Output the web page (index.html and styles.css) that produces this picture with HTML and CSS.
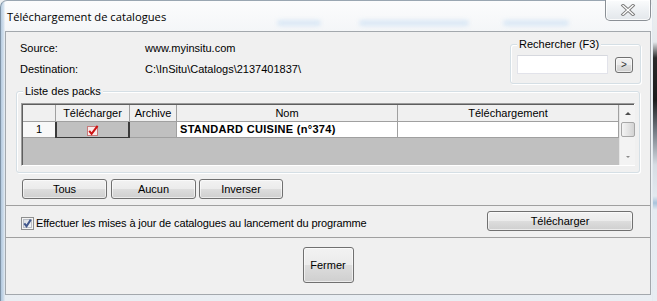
FILE: index.html
```html
<!DOCTYPE html>
<html lang="fr">
<head>
<meta charset="utf-8">
<title>Téléchargement de catalogues</title>
<link rel="stylesheet" href="styles.css">
</head>
<body>
<div class="desktop">
  <div class="window">
    <div class="titlebar">
      <span class="title">Téléchargement de catalogues</span>
      <div class="ghosts">
        <span class="ghost g1"></span>
        <span class="ghost g2"></span>
        <span class="ghost g3"></span>
      </div>
      <div class="close">
        <svg width="16" height="12" viewBox="0 0 16 12">
          <path d="M3 1.5 L13 10.5 M13 1.5 L3 10.5" stroke="#7a7a7a" stroke-width="3.2" stroke-linecap="square" fill="none"/>
          <path d="M3 1.5 L13 10.5 M13 1.5 L3 10.5" stroke="#ffffff" stroke-width="1.3" stroke-linecap="square" fill="none"/>
        </svg>
      </div>
    </div>
    <div class="client">
      <div class="top">
        <div class="info">
          <div class="info-row"><span class="lbl">Source:</span><span>www.myinsitu.com</span></div>
          <div class="info-row"><span class="lbl">Destination:</span><span>C:\InSitu\Catalogs\2137401837\</span></div>
        </div>
        <div class="group search">
          <div class="legend">Rechercher (F3)</div>
          <div class="search-row">
            <div class="input"></div>
            <div class="btn small">&gt;</div>
          </div>
        </div>
      </div>
      <div class="group packs">
        <div class="legend">Liste des packs</div>
        <div class="grid">
          <div class="hc corner"></div>
          <div class="hc">Télécharger</div>
          <div class="hc">Archive</div>
          <div class="hc">Nom</div>
          <div class="hc">Téléchargement</div>
          <div class="scroll">
            <div class="sb-up"><span class="tri-up"></span></div>
            <div class="thumb"></div>
            <div class="sb-down"><span class="tri-down"></span></div>
          </div>
          <div class="rc rownum">1</div>
          <div class="rc sel">
            <svg width="12" height="11" viewBox="0 0 12 11">
              <rect x="0.5" y="1.5" width="10" height="9" fill="#fbeaea" stroke="#c77a7a"/>
              <path d="M2.2 5.8 L4.6 8.8 L10.6 0.8" stroke="#cc1111" stroke-width="2" fill="none"/>
            </svg>
          </div>
          <div class="rc gray"></div>
          <div class="rc name">STANDARD CUISINE (n°374)</div>
          <div class="rc white"></div>
          <div class="empty"></div>
        </div>
      </div>
      <div class="btnrow">
        <div class="btn b-tous">Tous</div>
        <div class="btn b-aucun">Aucun</div>
        <div class="btn b-inv">Inverser</div>
      </div>
      <div class="sep"></div>
      <div class="optrow">
        <div class="check">
          <svg class="cb" width="13" height="13" viewBox="0 0 13 13">
            <defs>
              <linearGradient id="cbg" x1="0" y1="0" x2="1" y2="1">
                <stop offset="0" stop-color="#d8dde3"/>
                <stop offset="1" stop-color="#f6f7f9"/>
              </linearGradient>
            </defs>
            <rect x="0.5" y="0.5" width="12" height="12" fill="#f4f4f4" stroke="#8e8f8f"/>
            <rect x="2.5" y="2.5" width="8" height="8" fill="url(#cbg)" stroke="#b9bec6"/>
            <path d="M3.3 6.4 L5.5 9.2 L9.8 2.6" stroke="#42588c" stroke-width="2" fill="none"/>
          </svg>
          <span class="cbl">Effectuer les mises à jour de catalogues au lancement du programme</span>
        </div>
        <div class="btn b-dl">Télécharger</div>
      </div>
      <div class="sep sep2"></div>
      <div class="footer">
        <div class="btn b-close">Fermer</div>
      </div>
    </div>
  </div>
</div>
</body>
</html>
```
FILE: styles.css
```css
* { box-sizing: border-box; }
html, body { margin: 0; padding: 0; }
body {
  width: 657px;
  height: 301px;
  overflow: hidden;
  font-family: "Liberation Sans", Arial, sans-serif;
  font-size: 11px;
  color: #000;
}
.desktop {
  width: 657px;
  height: 301px;
  overflow: hidden;
  background: linear-gradient(to bottom, #eef0f2 0, #e6e9ec 42px, #2a2a2a 58px, #1c1c1c 100px, #6f7780 130px, #d6dde4 165px, #e2e9ef 196px, #a9c3db 203px, #e5ebf1 210px, #e8edf2 301px);
}
.window {
  width: 653px;
  height: 301px;
  border-left: 1px solid #7f93a6;
  border-top: 1px solid #9aa6b2;
  border-right: 1px solid #e4eaf0;
  border-radius: 7px 7px 0 0;
  padding: 0 0 0 4px;
  background:
    linear-gradient(to right, rgba(120,160,200,0.5) 0, rgba(170,198,224,0.4) 3px, rgba(255,255,255,0) 4px),
    linear-gradient(to bottom, #fcfcfd 0, #f4f6f8 30px, #e9eef3 100%);
}
.titlebar {
  height: 30px;
  display: flex;
  align-items: flex-start;
}
.title {
  font-family: "Open Sans", "Noto Sans", sans-serif;
  font-size: 11.2px;
  padding: 8px 0 0 2px;
  width: 272px;
  color: #000;
}
.ghosts {
  display: flex;
  padding-top: 19px;
}
.ghost {
  height: 6px;
  background: #cfe2f4;
  border-radius: 3px;
  filter: blur(2px);
  opacity: 0.7;
}
.g1 { width: 44px; }
.g2 { width: 110px; margin-left: 38px; }
.g3 { width: 66px; margin-left: 34px; }
.close {
  margin-left: auto;
  margin-top: -1px;
  margin-right: 1px;
  width: 46px;
  height: 21px;
  border: 1px solid #8b9096;
  border-top: none;
  border-radius: 0 0 5px 5px;
  background: linear-gradient(to bottom, #fbfcfd 0, #eef1f4 50%, #e3e7eb 100%);
  display: flex;
  align-items: center;
  justify-content: center;
  box-shadow: inset 0 0 0 1px rgba(255,255,255,0.8);
}
.client {
  width: 646px;
  height: 264px;
  background: #f0f0f0;
  border: 1px solid #a3a8ad;
}
.top {
  display: flex;
  justify-content: space-between;
  height: 52px;
}
.info {
  padding: 6px 0 0 14px;
}
.info-row {
  display: flex;
  height: 21px;
  line-height: 21px;
}
.lbl { width: 125px; }
.group {
  border: 1px solid #d5dfe5;
  border-radius: 3px;
  box-shadow: inset 1px 1px 0 #fff, 1px 1px 0 #fff;
}
.legend {
  width: fit-content;
  line-height: 13px;
  height: 13px;
  margin-top: -7px;
  padding: 0 2px;
  background: #f0f0f0;
}
.search {
  margin: 12px 9px 0 0;
  width: 131px;
  height: 40px;
  padding: 0 0 0 6px;
}
.search-row {
  display: flex;
  align-items: center;
  margin-top: 4px;
}
.input {
  width: 91px;
  height: 19px;
  background: #fff;
  border: 1px solid #e2e3ea;
  border-top-color: #d6d8de;
}
.btn {
  border: 1px solid #707070;
  border-radius: 3px;
  background: linear-gradient(to bottom, #f2f2f2 0, #ebebeb 50%, #dddddd 51%, #cfcfcf 100%);
  box-shadow: inset 0 0 0 1px rgba(255,255,255,0.6);
  display: flex;
  align-items: center;
  justify-content: center;
  line-height: 13px;
}
.small {
  width: 18px;
  height: 16px;
  margin-left: 7px;
  color: #333;
  font-size: 10px;
}
.packs {
  margin: 7px 10px 0 10px;
  height: 82px;
  padding: 0 4px 0 4px;
}
.packs .legend { margin-left: 2px; }
.grid {
  margin-top: 5px;
  width: 614px;
  height: 63px;
  border: 1px solid;
  border-color: #9b9b9b #ffffff #ffffff #9b9b9b;
  box-shadow: inset 1px 1px 0 #5e5e5e;
  display: grid;
  grid-template-columns: 33px 74px 47px 221px 221px 16px;
  grid-template-rows: 17px 16px 1fr;
  background: #c0c0c0;
  padding: 1px 0 0 1px;
}
.hc {
  background: #f0f0f0;
  border-right: 1px solid #a0a0a0;
  border-bottom: 1px solid #a0a0a0;
  text-align: center;
  line-height: 16px;
  white-space: nowrap;
  overflow: hidden;
}
.scroll {
  grid-row: 1 / 4;
  grid-column: 6;
  background: #f3f3f3;
  border-left: 1px solid #e6e6e6;
  display: flex;
  flex-direction: column;
  align-items: center;
}
.sb-up {
  height: 17px;
  width: 100%;
  display: flex;
  align-items: center;
  justify-content: center;
}
.tri-up {
  width: 0; height: 0;
  border-left: 3px solid transparent;
  border-right: 3px solid transparent;
  border-bottom: 3px solid #4d4d4d;
}
.thumb {
  width: 14px;
  height: 15px;
  border: 1px solid #a6a6a6;
  border-radius: 2px;
  background: linear-gradient(to right, #f4f4f4 0, #e4e4e4 50%, #d3d3d3 100%);
}
.sb-down {
  margin-top: auto;
  height: 9px;
  width: 100%;
  display: flex;
  justify-content: center;
}
.tri-down {
  width: 0; height: 0;
  border-left: 2px solid transparent;
  border-right: 2px solid transparent;
  border-top: 2px solid #8a8a8a;
}
.rc {
  border-bottom: 1px solid #a0a0a0;
  border-right: 1px solid #a0a0a0;
  line-height: 15px;
  white-space: nowrap;
  overflow: hidden;
}
.rownum {
  background: #f8f8f8;
  text-align: center;
}
.sel {
  background: #c0c0c0;
  border-left: 2px solid #3a3a3a;
  border-right: 2px solid #3a3a3a;
  border-bottom: 1px solid #3a3a3a;
  margin-left: -1px;
  display: flex;
  align-items: center;
  justify-content: center;
  padding-top: 1px;
}
.gray { background: #c0c0c0; }
.name {
  background: #fff;
  font-weight: bold;
  letter-spacing: 0.3px;
  padding-left: 3px;
}
.white { background: #fff; }
.empty {
  grid-column: 1 / 6;
  background: #c0c0c0;
}
.btnrow {
  display: flex;
  margin: 6px 0 0 16px;
  height: 20px;
}
.btnrow .btn { height: 20px; }
.b-tous { width: 85px; }
.b-aucun { width: 85px; margin-left: 4px; }
.b-inv { width: 84px; margin-left: 3px; }
.sep {
  margin-top: 6px;
  height: 1px;
  background: #a0a0a0;
}
.optrow {
  display: flex;
  justify-content: space-between;
  align-items: flex-start;
  margin-top: 5px;
  height: 20px;
}
.check {
  display: flex;
  align-items: center;
  margin: 6px 0 0 15px;
  line-height: 13px;
}
.cbl { letter-spacing: -0.12px; }
.cb { margin-right: 2px; flex: none; }
.b-dl {
  width: 146px;
  height: 20px;
  margin-right: 17px;
}
.sep2 { margin-top: 6px; }
.footer {
  display: flex;
  justify-content: center;
  margin-top: 9px;
}
.b-close {
  width: 51px;
  height: 36px;
}
```
